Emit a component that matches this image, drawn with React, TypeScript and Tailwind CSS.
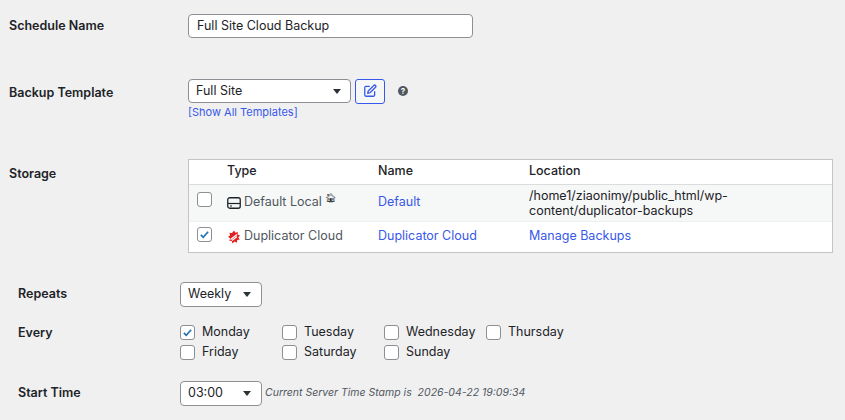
import React from "react";

const Caret = () => (
  <svg width="8" height="5" viewBox="0 0 8 5"><path d="M0 0h8L4 5z" fill="#2c3338" /></svg>
);
const Box = ({ checked }: { checked?: boolean }) => (
  <span className="inline-flex w-[15px] h-[15px] rounded-[3px] border border-[#8c8f94] bg-white items-center justify-center shrink-0">
    {checked && (
      <svg width="11" height="11" viewBox="0 0 12 12"><path d="M2 6.5l2.6 2.6L10 3" stroke="#2271b1" strokeWidth="1.8" fill="none" /></svg>
    )}
  </span>
);
const Day = ({ d, c }: { d: string; c?: boolean }) => (
  <label className="flex items-center gap-[7px] w-[102px] h-[20px]"><Box checked={c} /><span>{d}</span></label>
);

export default function App() {
  return (
    <div className="w-[845px] h-[420px] bg-[#f0f0f1] text-[12.5px] text-[#1d2327] overflow-hidden" style={{ fontFamily: "Inter, 'Liberation Sans', sans-serif" }}>
      <div className="flex items-center h-[24px] mt-[14px]">
        <div className="w-[188px] pl-[9px] font-semibold">Schedule Name</div>
        <div className="w-[285px] h-[24px] border border-[#8c8f94] rounded-[4px] bg-white px-[8px] flex items-center">Full Site Cloud Backup</div>
      </div>
      <div className="flex mt-[41px]">
        <div className="w-[188px] pl-[9px] font-semibold pt-[5px]">Backup Template</div>
        <div>
          <div className="flex items-center h-[24px]">
            <div className="w-[163px] h-[24px] border border-[#8c8f94] rounded-[4px] bg-white pl-[7px] pr-[9px] flex items-center justify-between">Full Site<Caret /></div>
            <div className="ml-[4px] w-[30px] h-[25px] border border-[#3858e9] rounded-[3px] bg-[#f6f7f7] flex items-center justify-center">
              <svg width="14" height="14" viewBox="0 0 24 24" fill="none" stroke="#3858e9" strokeWidth="2.2" strokeLinecap="round" strokeLinejoin="round"><path d="M11 4H5a2 2 0 0 0-2 2v13a2 2 0 0 0 2 2h13a2 2 0 0 0 2-2v-6" /><path d="M18.5 2.5a2.1 2.1 0 0 1 3 3L12 15l-4 1 1-4z" /></svg>
            </div>
            <span className="ml-[13px] w-[10px] h-[10px] rounded-full bg-[#50575e] text-white text-[8px] font-bold flex items-center justify-center">?</span>
          </div>
          <div className="text-[#3858e9] text-[11px] mt-[1px]">[Show All Templates]</div>
        </div>
      </div>
      <div className="flex mt-[38px]">
        <div className="w-[188px] pl-[9px] font-semibold pt-[6px]">Storage</div>
        <div className="w-[645px] border border-[#c3c4c7] bg-white">
          <div className="flex items-center h-[25px] border-b border-[#dcdcde] font-medium">
            <div className="w-[38px]" /><div className="w-[151px]">Type</div><div className="w-[151px]">Name</div><div>Location</div>
          </div>
          <div className="flex items-center h-[37px] border-b border-[#f0f0f1] bg-[#f6f7f7]">
            <div className="w-[38px] pl-[8px]"><Box /></div>
            <div className="w-[151px] flex items-center gap-[3px] text-[#50575e]">
              <svg width="14" height="12" viewBox="0 0 14 12"><rect x="0.75" y="0.75" width="12.5" height="10.5" rx="2" fill="none" stroke="#1d2327" strokeWidth="1.3" /><path d="M1 6.5h12" stroke="#1d2327" strokeWidth="1.2" /><path d="M3 9h2" stroke="#1d2327" strokeWidth="1" /></svg>
              Default Local<span className="text-[9px] -mt-[10px] text-[#1d2327]">🏠︎</span>
            </div>
            <div className="w-[151px] text-[#3858e9]">Default</div>
            <div className="leading-[15px] w-[300px]">/home1/ziaonimy/public_html/wp-content/duplicator-backups</div>
          </div>
          <div className="flex items-center h-[30px]">
            <div className="w-[38px] pl-[8px]"><Box checked /></div>
            <div className="w-[151px] flex items-center gap-[3px] text-[#50575e]">
              <svg width="14" height="14" viewBox="0 0 14 14"><path d="M7 0.5l1.4 2.2 2.5-.8-.3 2.6 2.4 1-1.7 2 1.5 2.1-2.6.5-.2 2.6-2.4-1.2L5.4 13.6 4.8 11 2.2 10.8l1-2.4-2.1-1.6 2.1-1.5-.8-2.5 2.6.2z" fill="#e02020" /><path d="M3.5 9.5l6.5-5M5 10.5l5-4" stroke="#fff" strokeWidth="1.2" /></svg>
              Duplicator Cloud
            </div>
            <div className="w-[151px] text-[#3858e9]">Duplicator Cloud</div>
            <div className="text-[#3858e9]">Manage Backups</div>
          </div>
        </div>
      </div>
      <div className="flex items-center mt-[29px] h-[25px]">
        <div className="w-[180px] pl-[18px] font-semibold">Repeats</div>
        <div className="w-[82px] h-[25px] border border-[#8c8f94] rounded-[4px] bg-white pl-[7px] pr-[10px] flex items-center justify-between">Weekly<Caret /></div>
      </div>
      <div className="flex mt-[16px]">
        <div className="w-[180px] pl-[18px] font-semibold pt-[1px]">Every</div>
        <div>
          <div className="flex"><Day d="Monday" c /><Day d="Tuesday" /><Day d="Wednesday" /><Day d="Thursday" /></div>
          <div className="flex"><Day d="Friday" /><Day d="Saturday" /><Day d="Sunday" /></div>
        </div>
      </div>
      <div className="flex items-center mt-[18px] h-[25px]">
        <div className="w-[180px] pl-[18px] font-semibold">Start Time</div>
        <div className="w-[82px] h-[25px] border border-[#8c8f94] rounded-[4px] bg-white pl-[7px] pr-[10px] flex items-center justify-between">03:00<Caret /></div>
        <div className="ml-[3px] italic text-[10.5px] text-[#50575e]">Current Server Time Stamp is&nbsp; 2026-04-22 19:09:34</div>
      </div>
    </div>
  );
}
